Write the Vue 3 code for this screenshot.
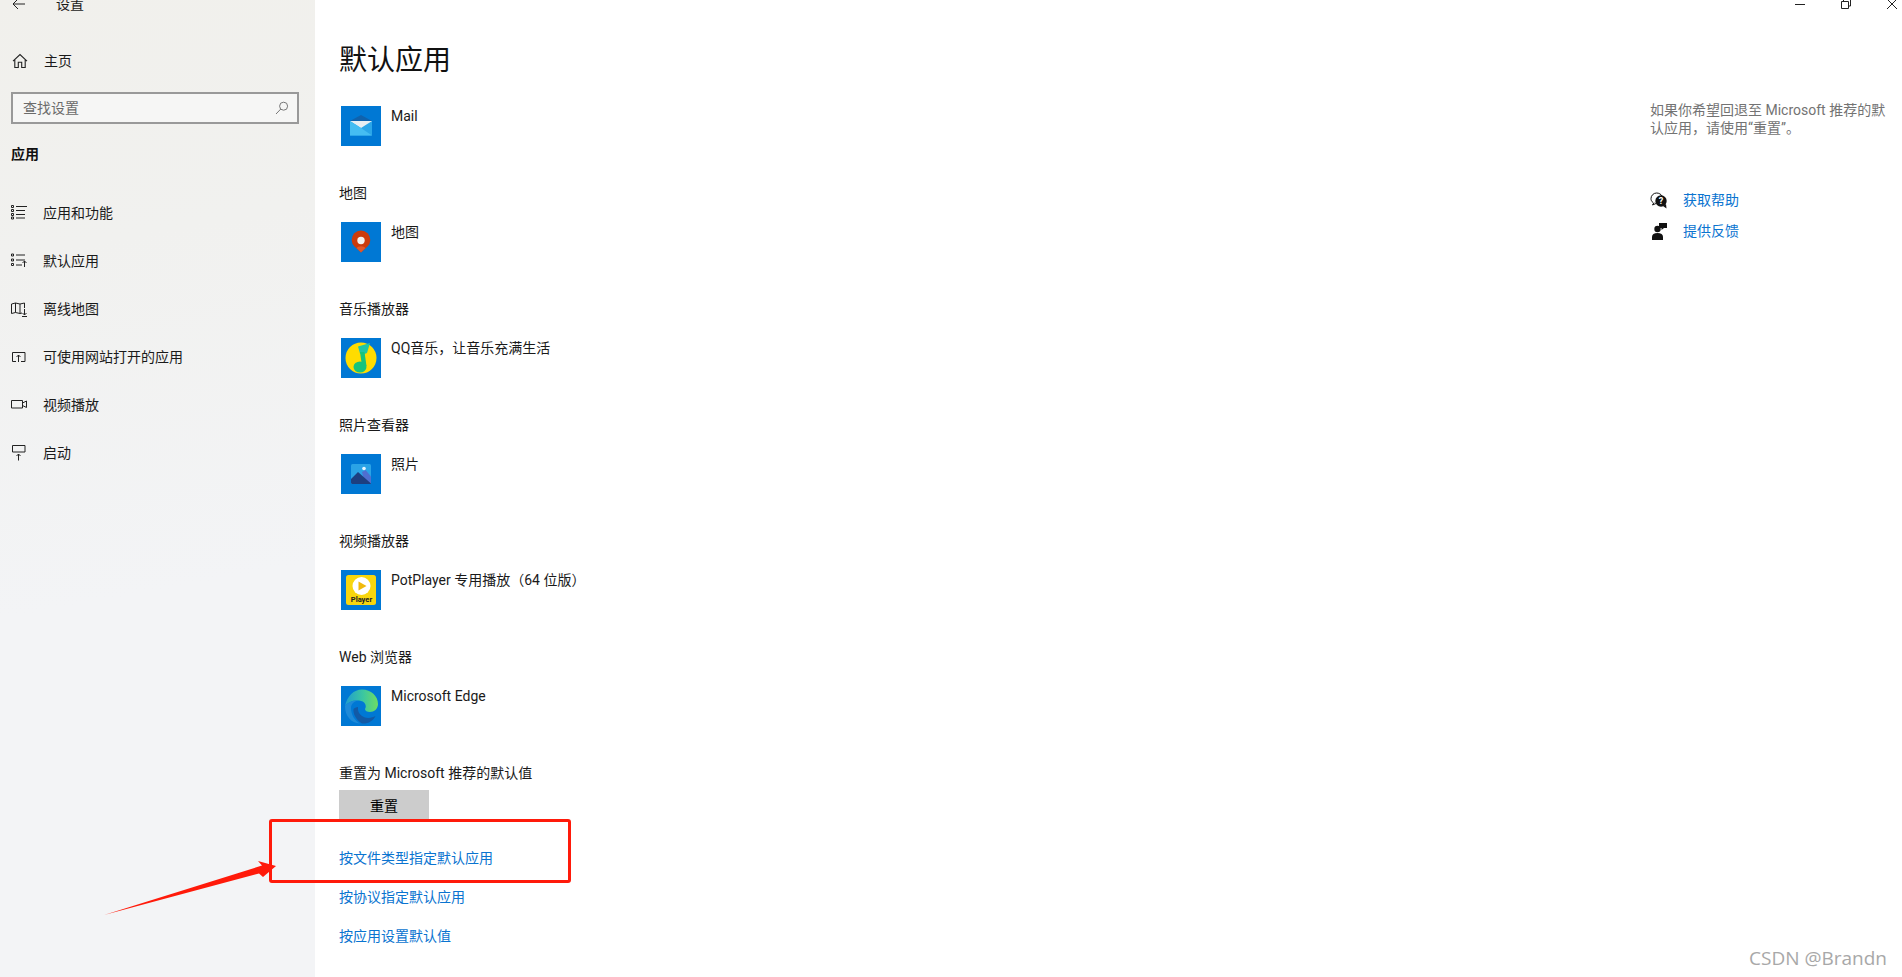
<script setup>
const navItems = [
  { label: '应用和功能', icon: 'list' },
  { label: '默认应用', icon: 'defaults' },
  { label: '离线地图', icon: 'map' },
  { label: '可使用网站打开的应用', icon: 'web' },
  { label: '视频播放', icon: 'video' },
  { label: '启动', icon: 'startup' }
];

const apps = [
  { title: '', name: 'Mail', icon: 'mail' },
  { title: '地图', name: '地图', icon: 'maps' },
  { title: '音乐播放器', name: 'QQ音乐，让音乐充满生活', icon: 'qq' },
  { title: '照片查看器', name: '照片', icon: 'photos' },
  { title: '视频播放器', name: 'PotPlayer 专用播放（64 位版）', icon: 'pot' },
  { title: 'Web 浏览器', name: 'Microsoft Edge', icon: 'edge' }
];

const links = ['按文件类型指定默认应用', '按协议指定默认应用', '按应用设置默认值'];
</script>

<template>
  <div class="page">
    <aside class="sidebar">
      <div class="titlebar">
        <svg class="back" width="14" height="12" viewBox="0 0 14 12" fill="none" stroke="#222" stroke-width="1">
          <path d="M13 6H1M6 1 1 6l5 5" />
        </svg>
        <span>设置</span>
      </div>
      <div class="home">
        <svg width="16" height="16" viewBox="0 0 16 16" fill="none" stroke="#222" stroke-width="1.1">
          <path d="M1 8.2 8 1.6l7 6.6M2.8 6.8v7.7h3.5V9.2h3.4v5.3h3.5V6.8" />
        </svg>
        <span>主页</span>
      </div>
      <div class="search">
        <span>查找设置</span>
        <svg width="14" height="14" viewBox="0 0 14 14" fill="none" stroke="#777" stroke-width="1">
          <circle cx="8.6" cy="5.2" r="4" />
          <path d="M5.8 8 1 13" />
        </svg>
      </div>
      <div class="group">应用</div>
      <nav class="nav">
        <div v-for="item in navItems" :key="item.label" class="nav-item">
          <svg width="17" height="17" viewBox="0 0 17 17" fill="none" stroke="#222" stroke-width="1">
            <template v-if="item.icon === 'list'">
              <path d="M.5.5h2v2h-2zM.5 4.500h2v2h-2zM.5 8.500h2v2h-2zM.5 12h2v2h-2zM5 1.500h11M5 5.500h9M5 9.500h9M5 13h9" />
            </template>
            <template v-else-if="item.icon === 'defaults'">
              <path d="M.5 1h2v2h-2zM.5 6h2v2h-2zM.5 10.500h2v2h-2zM5 2h9M5 7h9M5 12h6M13.500 14V8M11.500 10l2-2 2 2" />
            </template>
            <template v-else-if="item.icon === 'map'">
              <path d="M.5 3v9.500l4-1 4.500 1 2-.5M.5 3l4-1 4.500 1 4.500-1v5M4.500 2v9.500M9 3v9.500M13.500 8v6M11.500 12l2 2 2-2M11 15.500h5" />
            </template>
            <template v-else-if="item.icon === 'web'">
              <path d="M5 12.500H1.500v-9H14v9h-4M7.500 13V6M5.500 8l2-2 2 2" />
            </template>
            <template v-else-if="item.icon === 'video'">
              <path d="M.5 3.500h11V11H.5zM11.500 6l4-2v6.500l-4-2" />
            </template>
            <template v-else>
              <path d="M1.500.5H14V7H1.500zM7.500 15.500V9M5.500 11l2-2 2 2" />
            </template>
          </svg>
          <span>{{ item.label }}</span>
        </div>
      </nav>
    </aside>

    <main class="content">
      <h1>默认应用</h1>
      <section v-for="app in apps" :key="app.name" class="app-section">
        <h2 v-if="app.title">{{ app.title }}</h2>
        <div class="app-row">
          <svg class="app-icon" width="40" height="40" viewBox="0 0 40 40">
            <defs v-if="app.icon === 'edge'">
              <linearGradient id="edge-top" x1="0" y1="0.5" x2="1" y2="0.5">
                <stop offset="0" stop-color="#1f9cd0" />
                <stop offset="0.55" stop-color="#3cc7a0" />
                <stop offset="1" stop-color="#6fdc62" />
              </linearGradient>
            </defs>
            <rect width="40" height="40" fill="#0078d4" />
            <template v-if="app.icon === 'mail'">
              <path d="M9 15 20 9l11 6v6H9z" fill="#0f62ad" />
              <path d="M9 15h22v14.500H9z" fill="#2ba6e8" />
              <path d="M9 15h22L20 22z" fill="#e8eef2" />
              <path d="M9 29.500V15l11 7 11 7.500z" fill="#45bdf2" />
            </template>
            <template v-else-if="app.icon === 'maps'">
              <path d="M20 30.500 13.500 24.500A9.300 9.300 0 1 1 26.500 24.500z" fill="#cc3b0c" />
              <path d="M15.500 26a5 3 0 0 1 9 0L20 30.500z" fill="#e2582a" />
              <circle cx="20" cy="18.500" r="3.700" fill="#f5f1ee" />
            </template>
            <template v-else-if="app.icon === 'qq'">
              <circle cx="20" cy="20" r="15.500" fill="#ffdc00" />
              <path d="M17 8.500 29 5l-3 10-2.500 1-1 1.500-3.500-2z" fill="#1fc7a5" />
              <ellipse cx="19" cy="29" rx="6.500" ry="5.500" fill="#17c47c" />
              <path d="M19 14h4.500l2 14H21z" fill="#17c47c" />
            </template>
            <template v-else-if="app.icon === 'photos'">
              <rect x="10" y="10" width="20" height="20" rx="1.500" fill="#2aa3e6" />
              <path d="M21 18l3.500-2L30 22.500V29a1 1 0 0 1-1 1H24z" fill="#4f6fd0" />
              <path d="M10 25l7-7 13 11.500a1 1 0 0 1-1 .500H11.500A1.500 1.500 0 0 1 10 28.500z" fill="#1d3f80" />
              <circle cx="23" cy="14.500" r="1.800" fill="#e8f6ff" />
            </template>
            <template v-else-if="app.icon === 'pot'">
              <rect x="5" y="5" width="30" height="30" rx="2.500" fill="#f8d60e" />
              <circle cx="20.500" cy="16" r="9" fill="#fff" />
              <path d="M17.500 11.500 25.500 16l-8 4.500z" fill="#f0b90c" />
              <text x="20.500" y="32" class="pot-text">Player</text>
            </template>
            <template v-else>
              <path d="M4 20C6 10 13 3.500 21 3.500 30 3.500 37 10 37 18c0 5-4 8-8 8-3 0-5-1-5-3 2-3 0-8-6-8.500C12 14 7 16 4 20z" fill="url(#edge-top)" />
              <path d="M4 20c3-4 8-6 14-5.500-5 .5-8 3.500-8 7.500 0 7 4 13 9 15.500C10 37 4 30 4 20z" fill="#1e8ad8" />
              <path d="M12.500 23c-.5 4 1.500 10 8.500 14.500 6 .5 11-2.500 13.500-7.500-3.500 2-9.500 3-13.500 0-3-2-4.500-5-4-9-2 0-3.500 1-4.500 2z" fill="#125aa6" />
            </template>
          </svg>
          <span class="app-name">{{ app.name }}</span>
        </div>
      </section>
      <h2 class="reset-title">重置为 Microsoft 推荐的默认值</h2>
      <button class="reset-btn" type="button">重置</button>
      <div class="links">
        <a v-for="link in links" :key="link">{{ link }}</a>
      </div>
    </main>

    <aside class="side-help">
      <p>如果你希望回退至 Microsoft 推荐的默认应用，请使用“重置”。</p>
      <div class="help-links">
        <div class="help-link">
          <svg width="17" height="17" viewBox="0 0 17 17">
            <path d="M4 10.500 2.500 13l3.500-1.500M3 10.500C1.500 9.500 1 8 1 6.500 1 3.500 3.500 1 6.500 1c2.500 0 4.500 1.200 5.500 3" fill="none" stroke="#111" stroke-width="1" />
            <circle cx="11" cy="9" r="5.700" fill="#111" />
            <path d="M13 14l3.500 2.500-.5-4.500z" fill="#111" />
            <text x="11" y="12" class="help-q">?</text>
          </svg>
          <a>获取帮助</a>
        </div>
        <div class="help-link">
          <svg width="17" height="17" viewBox="0 0 17 17" fill="#111">
            <circle cx="7.500" cy="6" r="3.200" />
            <path d="M2 17v-3c0-2.500 2-4 5.500-4s5.500 1.500 5.500 4v3z" />
            <path d="M9 0h8v5h-3l-2.500 2V5H9z" />
          </svg>
          <a>提供反馈</a>
        </div>
      </div>
    </aside>

    <div class="window-controls">
      <svg width="12" height="10" viewBox="0 0 12 10" fill="none" stroke="#222"><path d="M1 4.500h10" /></svg>
      <svg width="12" height="10" viewBox="0 0 12 10" fill="none" stroke="#222"><path d="M1.500 1.500h7v7h-7zM3.500 1.500V-1h7v7H8.500" /></svg>
      <svg width="12" height="10" viewBox="0 0 12 10" fill="none" stroke="#222"><path d="M1-1 11 9M11-1 1 9" /></svg>
    </div>

    <div class="red-box"></div>
    <svg class="red-arrow" width="180" height="60" viewBox="0 0 180 60">
      <path d="M0 57 158 7.500 154 3l18 5-13 11-4-3.500z" fill="#ff1a0a" />
    </svg>
    <div class="watermark">CSDN @Brandn</div>
  </div>
</template>

<style>
html,
body {
  margin: 0;
  background: #fff;
}
</style>

<style scoped>
.page {
  position: relative;
  display: flex;
  width: 1902px;
  height: 977px;
  overflow: hidden;
  background: #fff;
  color: #1a1a1a;
  font-family: Roboto, "Noto Sans CJK SC", sans-serif;
  font-size: 14px;
  line-height: 20px;
}

.sidebar {
  flex: none;
  width: 315px;
  box-sizing: border-box;
  padding-left: 11px;
  background: linear-gradient(170deg, #f1f0ec 0%, #f1f1ef 25%, #f3f4f6 60%, #f3f4f6 100%);
}

.titlebar {
  display: flex;
  align-items: center;
  height: 32px;
  margin-top: -12px;
}

.back {
  margin-left: 1px;
}

.titlebar span {
  margin-left: 30px;
}

.home {
  display: flex;
  align-items: center;
  gap: 16px;
  height: 40px;
  margin-top: 21px;
  padding-left: 1px;
}

.search {
  display: flex;
  align-items: center;
  justify-content: space-between;
  box-sizing: border-box;
  width: 288px;
  height: 32px;
  margin-top: 11px;
  padding: 0 8px 1px 10px;
  border: 2px solid #999;
  background: #f6f6f5;
  color: #6b6b6b;
}

.group {
  margin-top: 20px;
  font-weight: 700;
  color: #111;
}

.nav {
  margin-top: 25px;
}

.nav-item {
  display: flex;
  align-items: center;
  gap: 15px;
  height: 48px;
}

.content {
  flex: none;
  width: 1000px;
  padding-left: 24px;
}

h1 {
  margin: 41px 0 25px;
  font-size: 28px;
  font-weight: 400;
  line-height: 40px;
  color: #111;
}

h2 {
  margin: 0 0 19px;
  font-size: 14px;
  font-weight: 400;
  line-height: 20px;
}

.app-section {
  margin-bottom: 37px;
}

.app-row {
  display: flex;
  align-items: flex-start;
  gap: 10px;
  margin-left: 2px;
}

.app-icon {
  flex: none;
}

.pot-text {
  font-size: 7.5px;
  font-weight: 700;
  fill: #222;
  text-anchor: middle;
}

.reset-title {
  margin-bottom: 7px;
}

.reset-btn {
  display: block;
  width: 90px;
  height: 32px;
  padding: 0;
  border: 0;
  background: #ccc;
  color: #000;
  font: inherit;
}

.links {
  display: flex;
  flex-direction: column;
  gap: 19px;
  margin-top: 26px;
}

a {
  color: #0a74d0;
}

.side-help {
  flex: none;
  width: 240px;
  margin-left: 311px;
  padding-top: 101px;
  color: #737373;
}

.side-help p {
  margin: 0;
  line-height: 18px;
}

.help-links {
  display: flex;
  flex-direction: column;
  gap: 11px;
  margin-top: 53px;
}

.help-link {
  display: flex;
  align-items: center;
  gap: 16px;
}

.help-q {
  font-size: 9px;
  font-weight: 700;
  fill: #fff;
  text-anchor: middle;
}

.window-controls {
  position: absolute;
  top: 0;
  right: 4px;
  display: flex;
  gap: 34px;
}

.window-controls svg {
  overflow: visible;
}

.red-box {
  position: absolute;
  left: 269px;
  top: 819px;
  box-sizing: border-box;
  width: 302px;
  height: 64px;
  border: 3px solid #ff1a0a;
  border-radius: 3px;
}

.red-arrow {
  position: absolute;
  left: 104px;
  top: 858px;
}

.watermark {
  position: absolute;
  right: 15px;
  bottom: 6px;
  font-family: "Open Sans", sans-serif;
  font-size: 19px;
  line-height: 26px;
  color: #a8a8a8;
}
</style>
